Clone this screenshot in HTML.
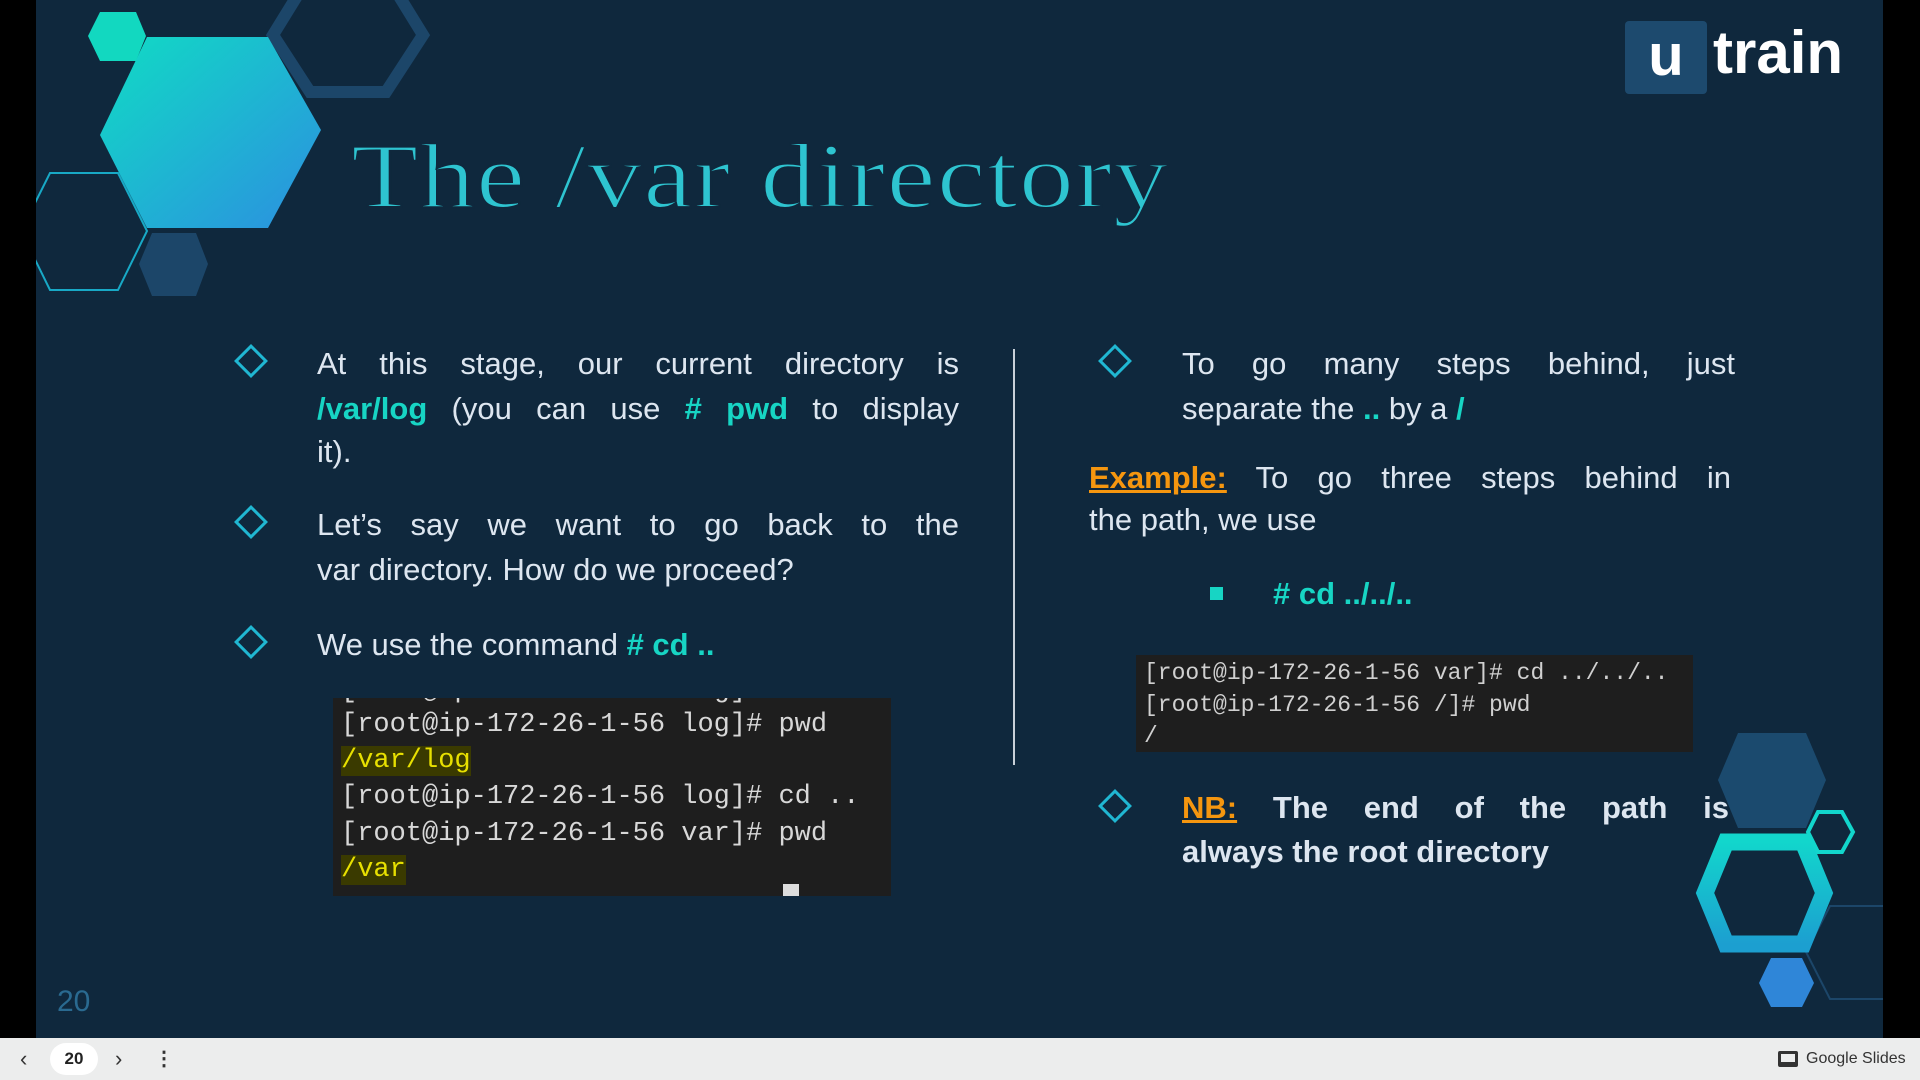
<!DOCTYPE html>
<html><head><meta charset="utf-8"><style>
*{margin:0;padding:0;box-sizing:border-box}
body{width:1920px;height:1080px;background:#000;overflow:hidden;font-family:"Liberation Sans",sans-serif;position:relative}
.slide{position:absolute;left:36px;top:0;width:1847px;height:1038px;background:#0f283d;overflow:hidden}
.abs{position:absolute}
.t{color:#dde6f0;font-size:31px;white-space:nowrap}
.j{text-align:justify;text-align-last:justify;white-space:normal}
.c{color:#17d5c4;font-weight:bold}
.o{color:#f5960f;font-weight:bold;text-decoration:underline}
.dia{position:absolute;width:24px;height:24px;border:3px solid #20b7d2;transform:rotate(45deg)}
.term{position:absolute;background:#1e1e1e;font-family:"Liberation Mono",monospace;color:#d8d8d8;overflow:hidden}
.term div{position:absolute;left:8px;white-space:pre}
.hl{background:#3a3a00;color:#e8e000}
.bar{position:absolute;left:0;top:1038px;width:1920px;height:42px;background:#eceded}
</style></head><body>
<div class="slide">
<svg class="abs" style="left:-36px;top:0" width="1920" height="1038">
<defs><linearGradient id="g1" x1="0" y1="0" x2="1" y2="1"><stop offset="0" stop-color="#10dcc4"/><stop offset="1" stop-color="#2c8fe0"/></linearGradient>
<linearGradient id="g2" x1="0" y1="0" x2="0" y2="1"><stop offset="0" stop-color="#12d6cc"/><stop offset="1" stop-color="#1c9fd0"/></linearGradient></defs>
<polygon points="310,-25 386,-25 423,35 386,92 310,92 273,35" fill="none" stroke="#1c4669" stroke-width="12"/>
<polygon points="147,37 268,37 321,130 268,228 147,228 100,135" fill="url(#g1)"/>
<polygon points="100,12 136,12 146,36 136,61 100,61 88,36" fill="#12d8c0"/>
<polygon points="50,173 118,173 147,231 118,290 50,290 21,231" fill="none" stroke="#18a9c6" stroke-width="2"/>
<polygon points="152,233 196,233 208,264 196,296 152,296 139,264" fill="#1c4669"/>
<polygon points="1738,733 1806,733 1826,780 1806,828 1738,828 1718,780" fill="#1b4a6e"/>
<polygon points="1830,906 1900,906 1930,952 1900,999 1830,999 1806,952" fill="none" stroke="#1c4669" stroke-width="2"/>
<polygon points="1726,842 1803,842 1824,893 1803,944 1726,944 1705,893" fill="none" stroke="url(#g2)" stroke-width="17"/>
<polygon points="1818,812 1842,812 1853,832 1842,852 1818,852 1808,832" fill="none" stroke="#12d6cc" stroke-width="4"/>
<polygon points="1771,958 1802,958 1814,983 1802,1007 1771,1007 1759,983" fill="#2f86d8"/>
</svg>
<div class="abs" style="left:315px;top:123px;font-family:'Liberation Serif',serif;font-size:92px;color:#2ec4d0;-webkit-text-stroke:2px #0f283d;letter-spacing:1px;transform:scaleX(1.2);transform-origin:left">The /var directory</div>
<div class="abs" style="left:1589px;top:21px;width:82px;height:73px;background:#1d4a6e;border-radius:4px;color:#fff;font-weight:bold;font-size:58px;text-align:center;line-height:70px">u</div>
<div class="abs" style="left:1677px;top:18px;color:#fff;font-weight:bold;font-size:60px">train</div>

<div class="dia" style="left:203px;top:349px"></div>
<div class="t abs" style="left:281px;top:346px;width:642px">
<div class="j">At this stage, our current directory is</div>
<div class="j" style="margin-top:9px"><span class="c">/var/log</span> (you can use <span class="c"># pwd</span> to display</div>
<div style="margin-top:7px">it).</div></div>
<div class="dia" style="left:203px;top:510px"></div>
<div class="t abs" style="left:281px;top:507px;width:642px">
<div class="j">Let’s say we want to go back to the</div>
<div style="margin-top:9px">var directory. How do we proceed?</div></div>
<div class="dia" style="left:203px;top:630px"></div>
<div class="t abs" style="left:281px;top:627px">We use the command <span class="c"># cd ..</span></div>

<div class="term" style="left:297px;top:698px;width:558px;height:198px;font-size:27px">
<div style="top:-22px">[root@ip-172-26-1-56 log]#</div>
<div style="top:12px">[root@ip-172-26-1-56 log]# pwd</div>
<div style="top:48px"><span class="hl">/var/log</span></div>
<div style="top:84px">[root@ip-172-26-1-56 log]# cd ..</div>
<div style="top:121px">[root@ip-172-26-1-56 var]# pwd</div>
<div style="top:157px"><span class="hl">/var</span></div>
<div style="top:186px;left:450px;width:16px;height:14px;background:#ddd"></div>
</div>

<div class="abs" style="left:977px;top:349px;width:2px;height:416px;background:#c8d0d8"></div>

<div class="dia" style="left:1067px;top:349px"></div>
<div class="t abs" style="left:1146px;top:346px;width:553px">
<div class="j">To go many steps behind, just</div>
<div style="margin-top:9px">separate the <span class="c">..</span> by a <span class="c">/</span></div></div>
<div class="t abs" style="left:1053px;top:460px;width:642px">
<div class="j"><span class="o">Example:</span> To go three steps behind in</div>
<div style="margin-top:6px">the path, we use</div></div>
<div class="abs" style="left:1174px;top:587px;width:13px;height:13px;background:#17d5c4"></div>
<div class="t abs c" style="left:1237px;top:576px;color:#17d5c4">#&nbsp;cd ../../..</div>

<div class="term" style="left:1100px;top:655px;width:557px;height:97px;font-size:23px;color:#d0d0d0">
<div style="top:5px">[root@ip-172-26-1-56 var]# cd ../../..</div>
<div style="top:37px">[root@ip-172-26-1-56 /]# pwd</div>
<div style="top:68px">/</div>
</div>

<div class="dia" style="left:1067px;top:794px"></div>
<div class="t abs" style="left:1146px;top:790px;width:547px;font-weight:bold">
<div class="j"><span class="o">NB:</span> The end of the path is</div>
<div style="margin-top:8px">always the root directory</div></div>

<div class="abs" style="left:21px;top:985px;color:#2a6a90;font-size:30px">20</div>
</div>

<div class="bar">
<div class="abs" style="left:20px;top:8px;font-size:22px;color:#333">‹</div>
<div class="abs" style="left:50px;top:5px;width:48px;height:32px;background:#fff;border-radius:16px;text-align:center;line-height:32px;font-size:17px;font-weight:bold;color:#222">20</div>
<div class="abs" style="left:115px;top:8px;font-size:22px;color:#333">›</div>
<div class="abs" style="left:154px;top:8px;font-size:20px;color:#333;font-weight:bold">⋮</div>
<div class="abs" style="left:1778px;top:13px;width:20px;height:16px;border:3px solid #333;border-bottom-width:5px;border-radius:2px"></div>
<div class="abs" style="left:1806px;top:12px;font-size:16px;color:#333">Google Slides</div>
</div>
</body></html>
